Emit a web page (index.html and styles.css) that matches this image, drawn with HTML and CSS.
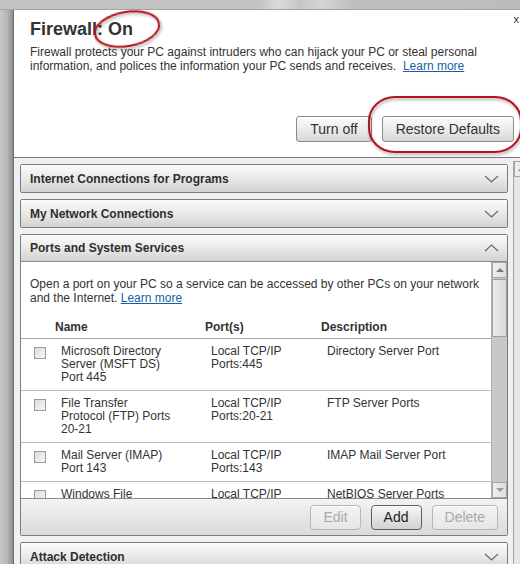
FILE: index.html
```html
<!DOCTYPE html>
<html lang="en">
<head>
	<meta charset="UTF-8">
	<title>Firewall</title>
	<link rel="stylesheet" href="styles.css">
</head>
<body>
	<div id="window">
		<div class="topbar"></div>
		<div class="main">
			<div class="side"></div>
			<div class="dialog">
				<div class="head">
					<div class="head-top">
						<h1>Firewall: On</h1>
						<a href="javascript:;" class="close">x</a>
					</div>
					<p class="intro">Firewall protects your PC against intruders who can hijack your PC or steal personal information, and polices the information your PC sends and receives.&nbsp; <a href="javascript:;">Learn more</a></p>
					<div class="actions">
						<button class="btn">Turn off</button>
						<button class="btn">Restore Defaults</button>
					</div>
				</div>
				<div class="content">
					<div class="sections">
						<div class="section">
							<div class="section-head">
								<span>Internet Connections for Programs</span>
								<svg class="chev" width="15" height="8" viewBox="0 0 15 8"><polyline points="1,1 7.5,7 14,1"/></svg>
							</div>
						</div>
						<div class="section">
							<div class="section-head">
								<span>My Network Connections</span>
								<svg class="chev" width="15" height="8" viewBox="0 0 15 8"><polyline points="1,1 7.5,7 14,1"/></svg>
							</div>
						</div>
						<div class="section">
							<div class="section-head open">
								<span>Ports and System Services</span>
								<svg class="chev" width="15" height="8" viewBox="0 0 15 8"><polyline points="1,7 7.5,1 14,7"/></svg>
							</div>
							<div class="section-body">
								<div class="ports">
									<p class="ports-desc">Open a port on your PC so a service can be accessed by other PCs on your network and the Internet. <a href="javascript:;">Learn more</a></p>
									<div class="grid-head">
										<span></span>
										<span>Name</span>
										<span>Port(s)</span>
										<span>Description</span>
									</div>
									<div class="row">
										<span class="check"></span>
										<span class="name">Microsoft Directory Server (MSFT DS) Port 445</span>
										<span class="port">Local TCP/IP Ports:445</span>
										<span class="desc">Directory Server Port</span>
									</div>
									<div class="row">
										<span class="check"></span>
										<span class="name">File Transfer Protocol (FTP) Ports 20-21</span>
										<span class="port">Local TCP/IP Ports:20-21</span>
										<span class="desc">FTP Server Ports</span>
									</div>
									<div class="row">
										<span class="check"></span>
										<span class="name">Mail Server (IMAP) Port 143</span>
										<span class="port">Local TCP/IP Ports:143</span>
										<span class="desc">IMAP Mail Server Port</span>
									</div>
									<div class="row">
										<span class="check"></span>
										<span class="name">Windows File Sharing Ports 137-139</span>
										<span class="port">Local TCP/IP Ports:137-139</span>
										<span class="desc">NetBIOS Server Ports</span>
									</div>
								</div>
								<div class="scrollbar">
									<div class="sb-btn"><i class="arrow-up"></i></div>
									<div class="sb-thumb"></div>
									<div class="sb-track"></div>
									<div class="sb-btn"><i class="arrow-down"></i></div>
								</div>
							</div>
							<div class="section-foot">
								<button class="btn small" disabled>Edit</button>
								<button class="btn small strong">Add</button>
								<button class="btn small" disabled>Delete</button>
							</div>
						</div>
						<div class="section">
							<div class="section-head">
								<span>Attack Detection</span>
								<svg class="chev" width="15" height="8" viewBox="0 0 15 8"><polyline points="1,1 7.5,7 14,1"/></svg>
							</div>
						</div>
					</div>
					<div class="outer-scroll">
						<div class="sb-btn"><i class="arrow-up"></i></div>
					</div>
				</div>
			</div>
		</div>
		<svg class="marks" width="520" height="564" viewBox="0 0 520 564">
			<ellipse cx="127" cy="29" rx="32.5" ry="17" transform="rotate(-10 127 29)"/>
			<rect x="369" y="97" width="152" height="55" rx="26" ry="24"/>
		</svg>
	</div>
</body>
</html>
```
FILE: styles.css
```css
*{margin: 0;padding: 0;box-sizing: border-box;}
html,body{width: 520px;height: 564px;overflow: hidden;}
body{font-family: "Liberation Sans", Arial, sans-serif;font-size: 12px;color: #333;background: #b8b8b8;}
a{color: #1a5fa6;text-decoration: underline;}

#window{position: relative;width: 536px;height: 564px;display: flex;flex-direction: column;}
.topbar{height: 10px;flex: none;background: linear-gradient(100deg, #c2c2c2 0, #c2c2c2 48%, #dadada 52%, #c6c6c6 56%, #d4d4d4 60%, #bebebe 66%, #bcbcbc 100%);border-bottom: 1px solid #a4a4a4;}
.main{flex: 1;display: flex;min-height: 0;}
.side{width: 13px;flex: none;background: linear-gradient(to right, #c6c6c6 0, #b8b8b8 50%, #a0a0a0 80%, #8a8a8a 100%);}
.dialog{flex: 1;display: flex;flex-direction: column;min-height: 0;background: #f0f0f0;border-left: 1px solid #6e6e6e;}

/* top pane */
.head{flex: none;background: #fff;padding: 8px 22px 15px 16px;border-bottom: 1px solid #7a7a7a;}
.head-top{display: flex;justify-content: space-between;align-items: flex-start;}
.head-top h1{font-size: 18px;line-height: 22px;font-weight: bold;color: #333;}
.close{margin: -5px -5px 0 0;font-size: 11px;line-height: 12px;color: #333;text-decoration: none;}
.intro{margin-top: 5px;line-height: 14px;max-width: 470px;}
.actions{display: flex;justify-content: flex-end;gap: 10px;margin-top: 43px;}

.btn{height: 26px;padding: 0 13px;font-family: inherit;font-size: 14px;color: #333;background: linear-gradient(#fbfbfb, #ececec 50%, #d6d6d6);border: 1px solid #8a8a8a;border-radius: 3px;box-shadow: inset 0 1px 0 #fff;}
.btn.small{height: 25px;padding: 0 12px;border-radius: 4px;border-color: #b6b6b6;background: linear-gradient(#f4f4f4, #e6e6e6);}
.btn.small.strong{border-color: #5e5e5e;color: #1e1e1e;background: linear-gradient(#f8f8f8, #e2e2e2 55%, #d2d2d2);}
.btn:disabled{color: #a9a9a9;}

/* accordion */
.content{flex: 1;display: flex;min-height: 0;}
.sections{width: 488px;flex: none;margin: 6px 5px 0 6px;}
.section{border: 1px solid #7c7c7c;border-radius: 2px;margin-bottom: 6px;background: #fff;}
.section-head{height: 27px;display: flex;align-items: center;justify-content: space-between;padding: 0 8px 0 9px;font-weight: bold;color: #2e2e2e;background: linear-gradient(#fafafa, #ebebeb 45%, #d2d2d2);}
.section-head.open{border-bottom: 1px solid #8a8a8a;}
.chev polyline{fill: none;stroke: #6a6a6a;stroke-width: 1.2;}

.section-body{display: flex;height: 237px;border-bottom: 1px solid #8a8a8a;}
.ports{flex: 1;overflow: hidden;}
.ports-desc{padding: 15px 10px 0 9px;line-height: 14px;}
.grid-head,.row{display: grid;grid-template-columns: 34px 150px 116px 1fr;}
.grid-head{padding: 15px 0 4px;line-height: 14px;font-weight: bold;border-bottom: 1px solid #a8a8a8;}
.row{padding: 6px 0;line-height: 13px;border-bottom: 1px solid #bdbdbd;}
.row .name{padding: 0 32px 0 6px;}
.row .port,.row .desc{padding-left: 6px;}
.check{width: 12px;height: 12px;margin: 2px 0 0 13px;border: 1px solid #9a9a9a;background: linear-gradient(135deg, #dcdcdc, #f7f7f7);}

.scrollbar{width: 16px;flex: none;display: flex;flex-direction: column;background: #c8c8c8;border-left: 1px solid #b0b0b0;}
.sb-btn{height: 16px;flex: none;display: flex;align-items: center;justify-content: center;background: linear-gradient(to right, #f0f0f0, #dedede);border: 1px solid #a4a4a4;}
.sb-thumb{height: 58px;flex: none;margin-top: 1px;background: linear-gradient(to right, #ececec, #d9d9d9);border: 1px solid #a0a0a0;}
.sb-track{flex: 1;}
.arrow-up{border: 4px solid transparent;border-top: 0;border-bottom: 4px solid #7a7a7a;}
.arrow-down{border: 4px solid transparent;border-bottom: 0;border-top: 4px solid #9a9a9a;}

.section-foot{height: 36px;display: flex;justify-content: flex-end;align-items: center;gap: 10px;padding-right: 9px;background: linear-gradient(#f3f3f3, #e4e4e4 60%, #dadada);}

.outer-scroll{width: 17px;flex: none;margin-top: 3px;background: #e6e6e6;border-left: 1px solid #a8a8a8;}

/* annotation marks */
.marks{position: absolute;top: 0;left: 0;pointer-events: none;}
.marks ellipse,.marks rect{fill: none;stroke: #b8111b;stroke-width: 2;filter: drop-shadow(1px 2px 1.5px rgba(0,0,0,0.35));}
```
